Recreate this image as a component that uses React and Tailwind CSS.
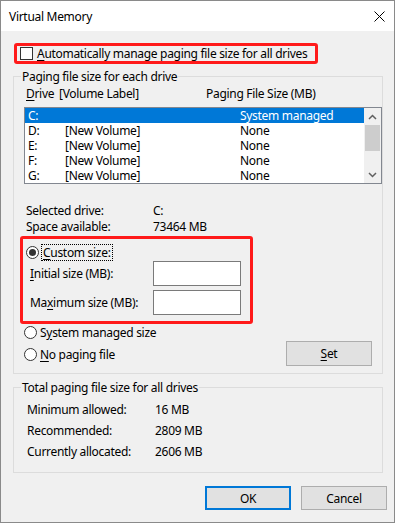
const font = { fontFamily: '"Noto Sans", "Liberation Sans", sans-serif' };

function U({ children }) {
  return <span className="underline underline-offset-[2px]">{children}</span>;
}

function Radio({ checked }) {
  return (
    <span className="flex h-[13px] w-[13px] shrink-0 items-center justify-center rounded-full border border-[#333] bg-white">
      {checked && <span className="h-[7px] w-[7px] rounded-full bg-[#333]" />}
    </span>
  );
}

function Chevron({ down }) {
  return (
    <svg width="9" height="6" viewBox="0 0 9 6">
      <polyline
        points={down ? "1,1 4.5,4.5 8,1" : "1,5 4.5,1.5 8,5"}
        fill="none"
        stroke="#606060"
        strokeWidth="1.5"
      />
    </svg>
  );
}

const drives = [
  { d: "C:", label: "", size: "System managed", sel: true },
  { d: "D:", label: "[New Volume]", size: "None" },
  { d: "E:", label: "[New Volume]", size: "None" },
  { d: "F:", label: "[New Volume]", size: "None" },
  { d: "G:", label: "[New Volume]", size: "None" },
];

export default function App() {
  return (
    <div
      className="flex h-[523px] w-[395px] flex-col border border-[#8a8a8a] bg-[#f0f0f0] text-[12px] leading-[15px] tracking-[-0.3px] text-black"
      style={font}
    >
      {/* title bar */}
      <div className="flex h-[30px] shrink-0 items-center justify-between bg-white pl-[8px] pr-[9px]">
        <span>Virtual Memory</span>
        <svg width="11" height="11" viewBox="0 0 11 11">
          <path d="M0.5 0.5 L10.5 10.5 M10.5 0.5 L0.5 10.5" stroke="#000" strokeWidth="1" />
        </svg>
      </div>

      <div className="flex flex-col px-[12px]">
        <div className="ml-[1px] mt-[12px] flex h-[21px] w-[304px] items-center gap-[4px] rounded-[3px] border-[3px] border-[#ff1a1a] pl-[3px]">
          <span className="h-[13px] w-[13px] shrink-0 border border-[#333] bg-white" />
          <span className="whitespace-nowrap">
            <U>A</U>utomatically manage paging file size for all drives
          </span>
        </div>

        {/* paging file size for each drive */}
        <div className="mt-[12px] h-[298px] w-[370px] border border-[#dcdcdc] pl-[10px] pr-[1px]">
          <div className="-ml-[3px] -mt-[8px] w-fit bg-[#f0f0f0] px-[1px]">
            Paging file size for each drive
          </div>
          <div className="mt-[2px] flex pl-[2px]">
            <span className="w-[33px]">
              <U>D</U>rive
            </span>
            <span className="w-[147px]">[Volume Label]</span>
            <span>Paging File Size (MB)</span>
          </div>
          <div className="mt-[6px] flex h-[77px] w-[358px] border border-[#828790] bg-white">
            <div className="flex flex-1 flex-col">
              {drives.map((r) => (
                <div
                  key={r.d}
                  className={`flex h-[15px] items-center pl-[3px] ${r.sel ? "bg-[#0078d7] text-white" : ""}`}
                >
                  <span className="w-[37px]">{r.d}</span>
                  <span className="w-[175px]">{r.label}</span>
                  <span>{r.size}</span>
                </div>
              ))}
            </div>
            <div className="flex w-[17px] flex-col items-center bg-[#f0f0f0]">
              <div className="flex h-[17px] items-center">
                <Chevron />
              </div>
              <div className="h-[26px] w-[15px] bg-[#cdcdcd]" />
              <div className="flex-1" />
              <div className="flex h-[17px] items-center">
                <Chevron down />
              </div>
            </div>
          </div>

          <div className="mt-[19px] grid grid-cols-[127px_1fr] gap-y-[1px] pl-[2px]">
            <span>Selected drive:</span>
            <span>C:</span>
            <span>Space available:</span>
            <span>73464 MB</span>
          </div>

          <div className="-ml-[4px] mt-[2px] h-[88px] w-[233px] rounded-[3px] border-[3px] border-[#ff1a1a] pl-[3px] pt-[5px]">
            <div className="flex items-center gap-[2px]">
              <Radio checked />
              <span className="border border-dotted border-black px-[1px]">
                <U>C</U>ustom size:
              </span>
            </div>
            <div className="flex items-center">
              <span className="w-[127px] pl-[4px]">
                <U>I</U>nitial size (MB):
              </span>
              <span className="h-[25px] w-[88px] border border-[#7a7a7a] bg-white" />
            </div>
            <div className="mt-[4px] flex items-center">
              <span className="w-[127px] pl-[4px]">
                Ma<U>x</U>imum size (MB):
              </span>
              <span className="h-[25px] w-[88px] border border-[#7a7a7a] bg-white" />
            </div>
          </div>

          <div className="flex items-start justify-between">
            <div className="flex flex-col gap-[7px] pt-[1px]">
              <div className="flex items-center gap-[3px]">
                <Radio />
                <span>
                  S<U>y</U>stem managed size
                </span>
              </div>
              <div className="flex items-center gap-[3px]">
                <Radio />
                <span>
                  <U>N</U>o paging file
                </span>
              </div>
            </div>
            <button className="mr-[9px] mt-[17px] h-[25px] w-[86px] border border-[#adadad] bg-[#e1e1e1]">
              <U>S</U>et
            </button>
          </div>
        </div>

        {/* totals */}
        <div className="mt-[13px] h-[86px] w-[370px] border border-[#dcdcdc] px-[13px]">
          <div className="-ml-[6px] -mt-[8px] w-fit bg-[#f0f0f0] px-[1px]">
            Total paging file size for all drives
          </div>
          <div className="mt-[7px] grid grid-cols-[128px_1fr] gap-y-[6px]">
            <span>Minimum allowed:</span>
            <span>16 MB</span>
            <span>Recommended:</span>
            <span>2809 MB</span>
            <span>Currently allocated:</span>
            <span>2606 MB</span>
          </div>
        </div>

        <div className="-mr-[5px] mt-[13px] flex justify-end gap-[10px]">
          <button className="h-[24px] w-[86px] border-2 border-[#0078d7] bg-[#e1e1e1]">OK</button>
          <button className="h-[24px] w-[86px] border border-[#adadad] bg-[#e1e1e1]">Cancel</button>
        </div>
      </div>
    </div>
  );
}
